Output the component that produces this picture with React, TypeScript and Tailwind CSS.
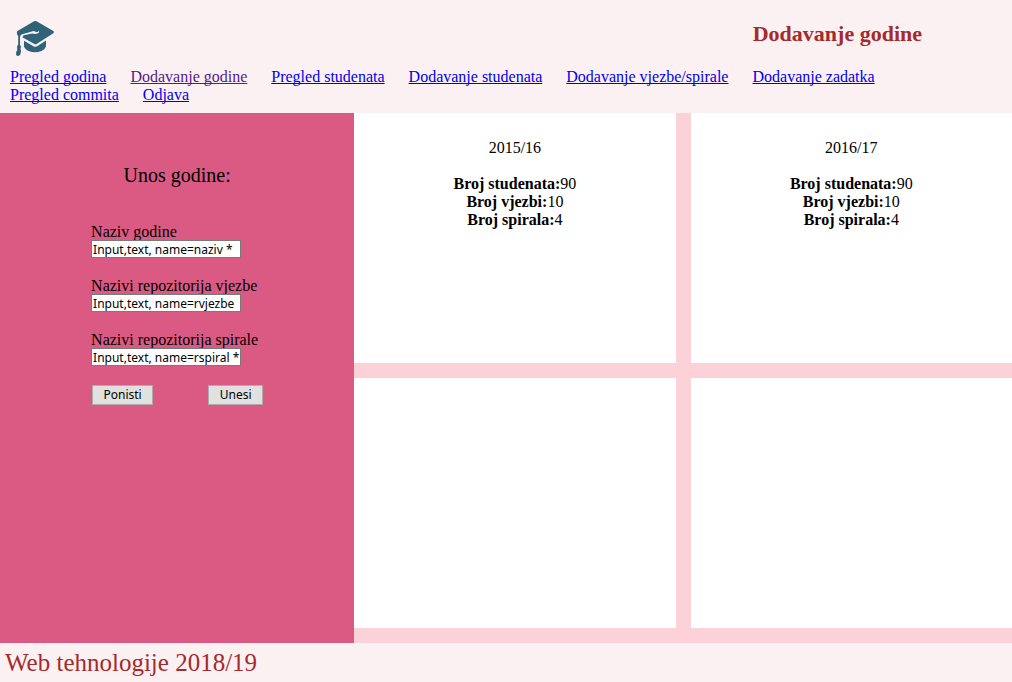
const links = [
  { label: 'Pregled godina' },
  { label: 'Dodavanje godine', visited: true },
  { label: 'Pregled studenata' },
  { label: 'Dodavanje studenata' },
  { label: 'Dodavanje vjezbe/spirale' },
  { label: 'Dodavanje zadatka' },
  { label: 'Pregled commita' },
  { label: 'Odjava' },
];

const fields = [
  { id: 'naziv', label: 'Naziv godine', value: 'Input,text, name=naziv *' },
  { id: 'rvjezbe', label: 'Nazivi repozitorija vjezbe', value: 'Input,text, name=rvjezbe' },
  { id: 'rspiral', label: 'Nazivi repozitorija spirale', value: 'Input,text, name=rspiral *' },
];

const years = [
  { name: '2015/16', students: 90, exercises: 10, spirals: 4 },
  { name: '2016/17', students: 90, exercises: 10, spirals: 4 },
  null,
  null,
];

const buttonClass =
  "h-5 border border-[#adadad] bg-[#e1e1e1] text-center font-['Noto_Sans',sans-serif] text-[12px] leading-4";

function Logo() {
  return (
    <svg className="ml-1 h-10 w-10" viewBox="0 0 40 40" aria-hidden="true">
      <path
        fill="#2f6478"
        d="M20 3.300 Q21.300 2.600 22.600 3.300 L39.300 13 Q40.600 14 39.300 15.200 L23 25.800 Q21.500 26.800 20 25.800 L8.300 19.300 L9.800 17.300 L18.200 15.600 Q21 16.400 24 15.300 Q25.400 14.600 24.900 12.800 Q24.200 14.300 21.800 13.900 Q19.800 12.300 18 13.500 L8 16.300 Q6.200 17 6 19 L6 27 L7 28.500 L6.500 31 L7 33 L6.500 36.300 Q4.300 39.300 2.100 37 L2.200 33.800 Q3.700 32.500 3.100 30.500 L3.100 28 L4.200 26.500 L4.200 18 Q2.600 16.800 3 13.800 Q3.300 13 4.300 12.500 Z"
      />
      <path
        fill="#2f6478"
        d="M10 22.800 L19.800 28.400 Q21.500 29.200 23.200 28.300 L32 22.500 L32 28.500 Q31 31.500 27.500 33 Q21 35.500 14.500 33 Q10.500 31 10 28.300 Z"
      />
    </svg>
  );
}

export default function App() {
  return (
    <div className="flex min-h-screen flex-col bg-[#fbf0f2] font-['Liberation_Serif',serif] text-[16px] leading-[18px] text-black">
      <header className="px-[10px] pt-[18px] pb-[9px]">
        <div className="flex items-start justify-between">
          <Logo />
          <h1 className="pr-20 text-[22px] leading-8 font-bold text-[#a52a2a]">Dodavanje godine</h1>
        </div>
        <nav className="mt-[10px] mr-20 flex flex-wrap gap-x-6 [text-decoration-skip-ink:none]">
          {links.map((link) => (
            <a
              key={link.label}
              href="#"
              className={link.visited ? 'text-[#551a8b] underline' : 'text-[#0000ee] underline'}
            >
              {link.label}
            </a>
          ))}
        </nav>
      </header>

      <div className="flex">
        <aside className="w-[35%] shrink-0 bg-[#db5a83] px-2 pt-[50px]">
          <form className="mx-auto w-[172px]" onSubmit={(event) => event.preventDefault()}>
            <h2 className="text-center text-[20px] leading-6">Unos godine:</h2>
            <div className="mt-9 flex flex-col gap-[19px]">
              {fields.map((field) => (
                <div key={field.id} className="flex flex-col items-start">
                  <label htmlFor={field.id} className="leading-[17px]">{field.label}</label>
                  <input
                    id={field.id}
                    name={field.id}
                    type="text"
                    defaultValue={field.value}
                    className="h-[18px] w-[150px] border border-[#7a7a7a] bg-white pl-px font-['Noto_Sans',sans-serif] text-[12px] leading-4"
                  />
                </div>
              ))}
            </div>
            <div className="mt-[19px] flex justify-between pl-px">
              <button type="reset" className={`${buttonClass} w-[61px]`}>Ponisti</button>
              <button type="submit" className={`${buttonClass} w-[55px]`}>Unesi</button>
            </div>
          </form>
        </aside>

        <main className="grid flex-1 auto-rows-[250px] grid-cols-2 gap-[15px] bg-[#fcd2d8] pb-[15px]">
          {years.map((year, index) => (
            <section key={index} className="bg-white pt-[26px] text-center">
              {year && (
                <>
                  <h3>{year.name}</h3>
                  <div className="mt-[18px]">
                    <p><b>Broj studenata:</b>{year.students}</p>
                    <p><b>Broj vjezbi:</b>{year.exercises}</p>
                    <p><b>Broj spirala:</b>{year.spirals}</p>
                  </div>
                </>
              )}
            </section>
          ))}
        </main>
      </div>

      <footer className="px-[5px] pt-[5px] pb-1 text-[25px] leading-[30px] text-[#a52a2a]">
        Web tehnologije 2018/19
      </footer>
    </div>
  );
}
